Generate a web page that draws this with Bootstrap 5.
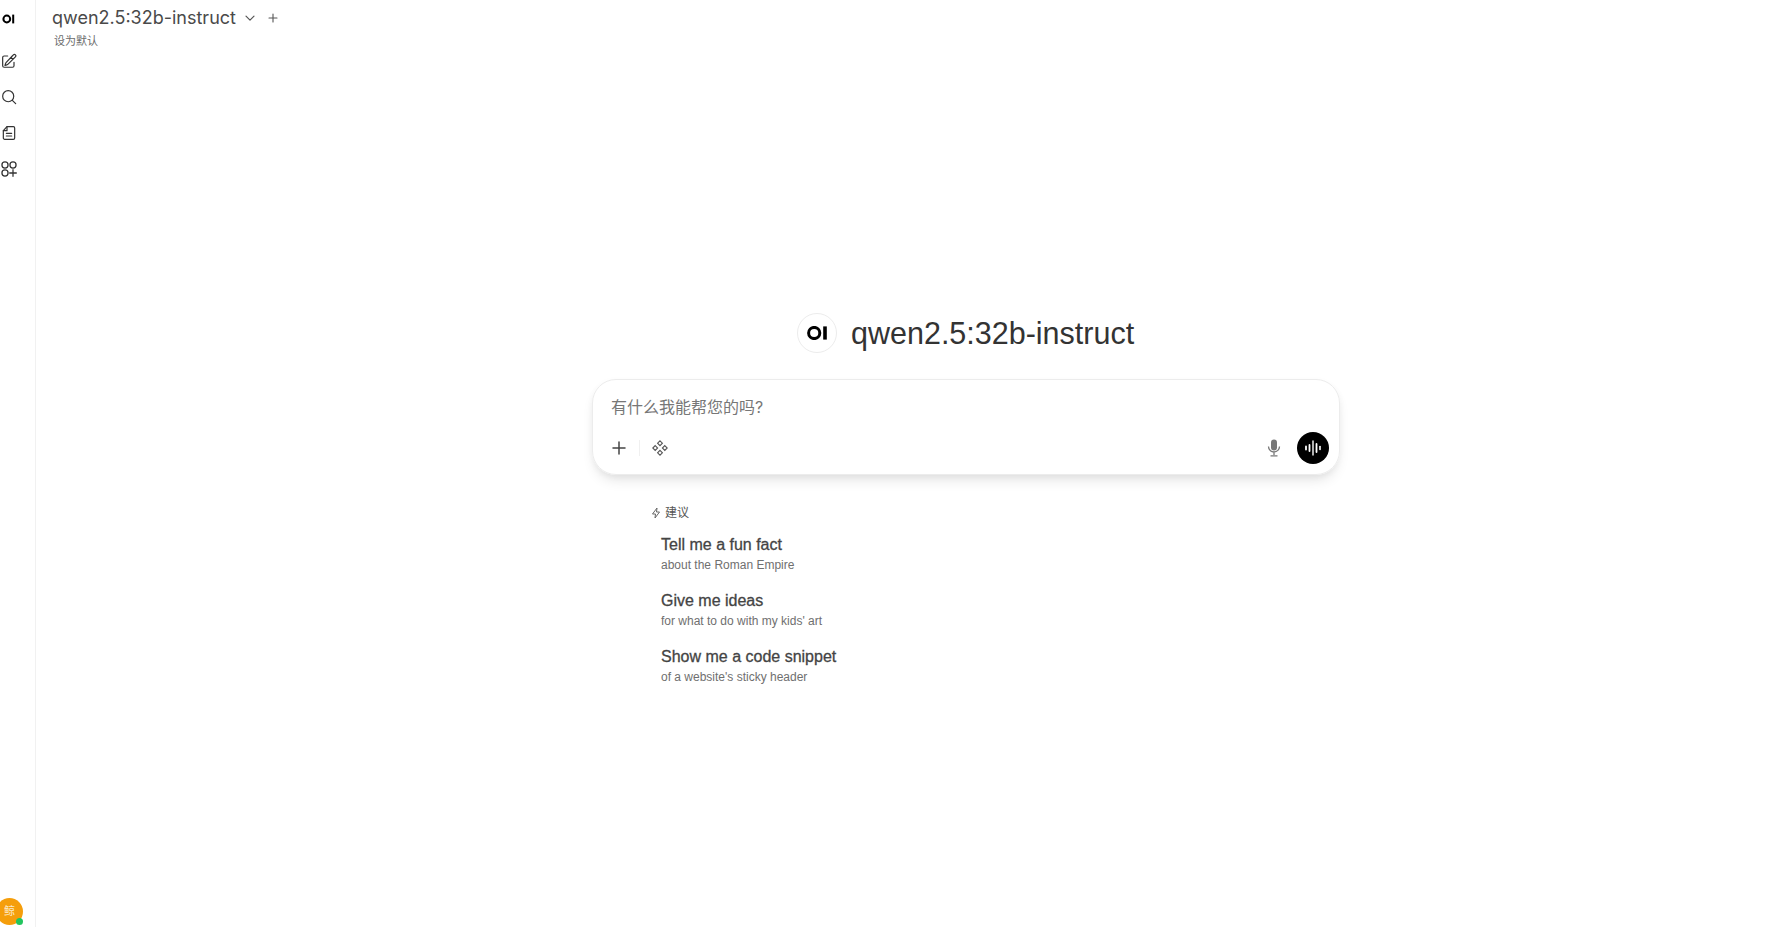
<!DOCTYPE html>
<html lang="zh">
<head>
  <meta charset="UTF-8" />
  <meta name="viewport" content="width=device-width, initial-scale=1.0"/>
  <title>Open WebUI</title>
  <link href="https://cdn.jsdelivr.net/npm/bootstrap@5.3.0/dist/css/bootstrap.min.css" rel="stylesheet"/>
  <style>
    html, body { height: 100%; overflow: hidden; }
    body {
      background: #fff;
      font-family: Inter, "Noto Sans CJK SC", sans-serif;
      color: #333;
    }
    .side-rail {
      width: 36px;
      height: 927px;
      border-right: 1px solid #f1f1f1;
      flex: none;
    }
    .rail-logo {
      height: 37px;
      padding-top: 5px;
      padding-left: 2px;
    }
    .rail-icons { padding-top: 14px; padding-left: 1px; gap: 16px; }
    .rail-icons svg { width: 16px; height: 20px; display: block; }
    .user-avatar {
      width: 27px;
      height: 27px;
      margin-left: -4px;
      margin-bottom: 2px;
      border-radius: 50%;
      background: #f59e0b;
      color: #fde9c4;
      font-size: 11px;
      position: relative;
    }
    .online-dot {
      position: absolute;
      right: 0;
      bottom: 0;
      width: 7px;
      height: 7px;
      border-radius: 50%;
      background: #22c55e;
    }
    .top-head { padding: 4px 0 0 16px; height: 52px; }
    .model-pick { font-size: 18px; line-height: 27px; color: #4a4a4a; }
    .pick-chevron { margin-left: 8px; margin-right: 12px; }
    .set-default { font-size: 11px; line-height: 16px; color: #6b6b6b; margin-left: 2px; margin-top: 2px; }
    .center-col { width: 748px; margin-left: 556px; padding-top: 261px; }
    .hero-row { gap: 14px; margin-left: 205px; height: 40px; }
    .hero-logo {
      width: 40px;
      height: 40px;
      border: 1px solid #ececec;
      border-radius: 50%;
    }
    .hero-name {
      font-family: "Liberation Sans", sans-serif;
      font-size: 30.5px;
      color: #333;
      line-height: 43px;
    }
    .prompt-box {
      margin-top: 26px;
      height: 96px;
      border: 1px solid #ececec;
      border-radius: 24px;
      box-shadow: 0 8px 14px -4px rgba(0,0,0,.12), 0 2px 6px rgba(0,0,0,.04);
      padding: 14px 10px 10px 19px;
    }
    .prompt-hint { font-size: 16px; line-height: 26px; color: #777; margin-left: -1px; }
    .tool-row { margin-top: 13px; height: 30px; }
    .tool-sep { width: 1px; height: 16px; background: #f0f0f0; margin: 0 12px 0 13px; }
    .voice-btn {
      width: 32px;
      height: 32px;
      border-radius: 50%;
      background: #000;
      margin-left: 16px;
    }
    .suggest-col { margin-left: 59px; margin-top: 29px; }
    .suggest-label { font-size: 12px; line-height: 18px; color: #555; gap: 3px; margin-left: -1px; }
    .suggest-list { margin-left: 10px; margin-top: 11px; }
    .suggest-item { height: 56px; }
    .suggest-title { font-family: "Liberation Sans", sans-serif; font-size: 16px; line-height: 24px; color: #444; -webkit-text-stroke: 0.3px #444; }
    .suggest-sub { font-family: "Liberation Sans", sans-serif; font-size: 12px; line-height: 17px; color: #6f6f6f; }
  </style>
</head>
<body>
  <div class="d-flex">
    <div class="side-rail d-flex flex-column">
      <div class="rail-logo">
        <svg width="14" height="14" viewBox="0 0 14 14"><circle cx="4.8" cy="7" r="3.4" fill="none" stroke="#000" stroke-width="2"/><rect x="10.2" y="2.6" width="2" height="8.8" fill="#000"/></svg>
      </div>
      <div class="rail-icons d-flex flex-column">
        <svg viewBox="0 0 24 24" fill="none" stroke="#333" stroke-width="1.8" stroke-linecap="round" stroke-linejoin="round"><path d="M16.9 4.5l1.7-1.7a2.1 2.1 0 0 1 3 3L10.6 16.8a4.5 4.5 0 0 1-1.9 1.1L6 18.7l.8-2.7a4.5 4.5 0 0 1 1.1-1.9L16.9 4.5zM15 6.5l3 3"/><path d="M19.5 14v5.2a2.2 2.2 0 0 1-2.2 2.2H4.7a2.2 2.2 0 0 1-2.2-2.2V6.7a2.2 2.2 0 0 1 2.2-2.2H10"/></svg>
        <svg viewBox="0 0 24 24" fill="none" stroke="#333" stroke-width="1.8" stroke-linecap="round"><circle cx="10.8" cy="10.8" r="8.3"/><path d="M17 17l5 5"/></svg>
        <svg viewBox="0 0 24 24" fill="none" stroke="#333" stroke-width="1.8" stroke-linecap="round" stroke-linejoin="round"><path d="M9 2.5h9.5a2 2 0 0 1 2 2v15a2 2 0 0 1-2 2h-13a2 2 0 0 1-2-2V8.5L9 2.5z"/><path d="M9 2.5v6H3.5M8 12.5h8M8 16.5h8"/></svg>
        <svg viewBox="0 0 24 24" fill="none" stroke="#333" stroke-width="1.9" stroke-linecap="round"><circle cx="6" cy="6" r="4.6"/><circle cx="18" cy="6" r="4.6"/><circle cx="6" cy="18" r="4.6"/><path d="M18 13v10M13 18h10"/></svg>
      </div>
      <div class="mt-auto">
        <div class="user-avatar d-flex align-items-center justify-content-center">鲸<span class="online-dot"></span></div>
      </div>
    </div>

    <div class="flex-grow-1">
      <div class="top-head">
        <div class="model-pick d-flex align-items-center">
          <span>qwen2.5:32b-instruct</span>
          <svg class="pick-chevron" width="12" height="12" viewBox="0 0 12 12" fill="none" stroke="#555" stroke-width="1.2" stroke-linecap="round" stroke-linejoin="round"><path d="M2 4.2l4 4 4-4"/></svg>
          <svg width="10" height="10" viewBox="0 0 10 10" fill="none" stroke="#555" stroke-width="1.1" stroke-linecap="round"><path d="M5 1v8M1 5h8"/></svg>
        </div>
        <div class="set-default">设为默认</div>
      </div>

      <div class="center-col">
        <div class="hero-row d-flex align-items-center">
          <div class="hero-logo d-flex align-items-center justify-content-center">
            <svg width="20" height="14" viewBox="0 0 20 14"><circle cx="7.2" cy="7" r="5.6" fill="none" stroke="#000" stroke-width="3"/><rect x="16.2" y="0.4" width="3.6" height="13.2" fill="#000"/></svg>
          </div>
          <div class="hero-name">qwen2.5:32b-instruct</div>
        </div>

        <div class="prompt-box">
          <div class="prompt-hint">有什么我能帮您的吗?</div>
          <div class="tool-row d-flex align-items-center">
            <svg width="14" height="14" viewBox="0 0 14 14" fill="none" stroke="#444" stroke-width="1.5" stroke-linecap="round"><path d="M7 1v12M1 7h12"/></svg>
            <span class="tool-sep"></span>
            <svg width="16" height="16" viewBox="0 0 16 16" fill="none" stroke="#555" stroke-width="1.1"><path d="M8 .8l2.4 2.4L8 5.6 5.6 3.2zM3.2 5.6L5.6 8l-2.4 2.4L.8 8zM12.8 5.6L15.2 8l-2.4 2.4L10.4 8zM8 10.4l2.4 2.4L8 15.2l-2.4-2.4z"/></svg>
            <svg class="ms-auto" width="14" height="18" viewBox="0 0 14 18"><rect x="4" y="0.5" width="6" height="11" rx="3" fill="#777"/><path d="M1.5 7.5a5.5 5.5 0 0 0 11 0M7 13v3M3.5 16.8h7" fill="none" stroke="#777" stroke-width="1.3"/></svg>
            <div class="voice-btn d-flex align-items-center justify-content-center">
              <svg width="18" height="18" viewBox="0 0 18 18" stroke="#fff" stroke-linecap="round" fill="none"><path stroke-width="1.8" d="M2 7.5v3M5.5 6v6"/><path stroke-width="1.4" d="M9 2v14"/><path stroke-width="1.8" d="M12.5 5v8"/><path stroke-width="1.6" d="M16 7.5v3"/></svg>
            </div>
          </div>
        </div>

        <div class="suggest-col">
          <div class="suggest-label d-flex align-items-center">
            <svg width="12" height="12" viewBox="0 0 24 24" fill="none" stroke="#666" stroke-width="2" stroke-linejoin="round"><path d="M14 2L5 14h6l-1 8 9-12h-6z"/></svg>
            <span>建议</span>
          </div>
          <div class="suggest-list">
            <div class="suggest-item"><div class="suggest-title">Tell me a fun fact</div><div class="suggest-sub">about the Roman Empire</div></div>
            <div class="suggest-item"><div class="suggest-title">Give me ideas</div><div class="suggest-sub">for what to do with my kids' art</div></div>
            <div class="suggest-item"><div class="suggest-title">Show me a code snippet</div><div class="suggest-sub">of a website's sticky header</div></div>
          </div>
        </div>
      </div>
    </div>
  </div>
  <script src="https://cdn.jsdelivr.net/npm/bootstrap@5.3.0/dist/js/bootstrap.bundle.min.js"></script>
</body>
</html>
